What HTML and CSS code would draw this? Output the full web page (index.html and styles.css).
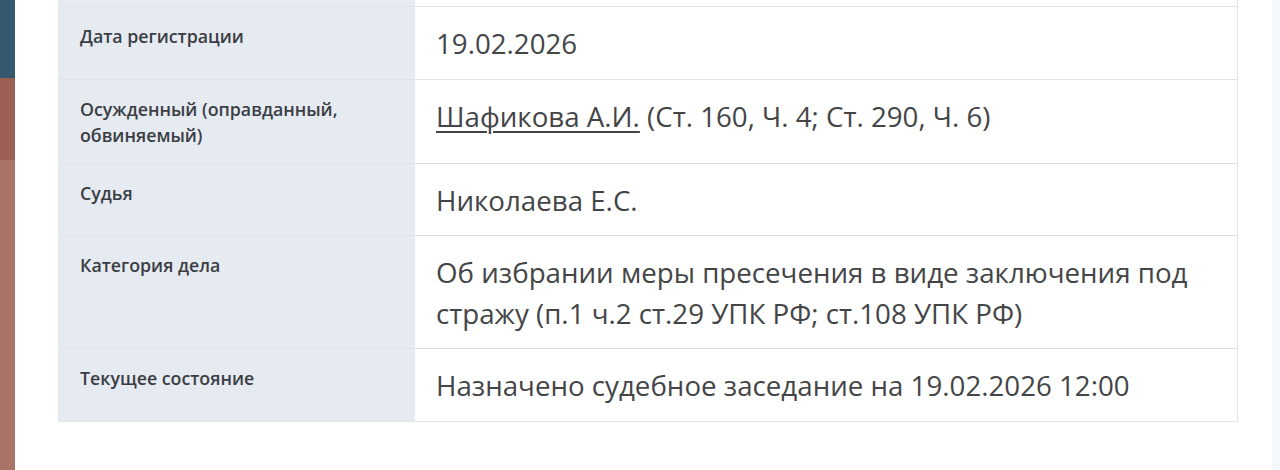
FILE: index.html
```html
<!DOCTYPE html>
<html lang="ru">
<head>
<meta charset="utf-8">
<link rel="stylesheet" href="styles.css">
</head>
<body>
<div class="page">
  <div class="stripe">
    <div class="stripe-a"></div>
    <div class="stripe-b"></div>
    <div class="stripe-c"></div>
  </div>
  <main class="content">
    <div class="table">
      <div class="row row-cut">
        <div class="label"></div>
        <div class="value"></div>
      </div>
      <div class="row">
        <div class="label">Дата регистрации</div>
        <div class="value">19.02.2026</div>
      </div>
      <div class="row">
        <div class="label">Осужденный (оправданный, обвиняемый)</div>
        <div class="value"><a class="link" href="#">Шафикова А.И.</a> (Ст. 160, Ч. 4; Ст. 290, Ч. 6)</div>
      </div>
      <div class="row">
        <div class="label">Судья</div>
        <div class="value">Николаева Е.С.</div>
      </div>
      <div class="row">
        <div class="label">Категория дела</div>
        <div class="value">Об избрании меры пресечения в виде заключения под стражу (п.1 ч.2 ст.29 УПК РФ; ст.108 УПК РФ)</div>
      </div>
      <div class="row">
        <div class="label">Текущее состояние</div>
        <div class="value">Назначено судебное заседание на 19.02.2026 12:00</div>
      </div>
    </div>
  </main>
  <div class="edge"></div>
</div>
</body>
</html>
```

FILE: styles.css
```css
html, body {
  margin: 0;
  padding: 0;
  background: #ffffff;
}
body {
  font-family: "Open Sans", "Noto Sans", sans-serif;
}
.page {
  display: flex;
  height: 470px;
  overflow: hidden;
}
.stripe {
  width: 15px;
  flex: none;
  display: flex;
  flex-direction: column;
}
.stripe-a { height: 78px; background: #355a70; }
.stripe-b { height: 82px; background: #9b5f53; }
.stripe-c { flex: 1; background: #a97367; }
.content {
  flex: 1;
  padding-left: 43px;
  padding-right: 34px;
}
.edge {
  width: 8px;
  flex: none;
  background: #f6f7f9;
}
.table {
  box-sizing: border-box;
  width: 1180px;
  border-left: 1px solid #e2e5ea;
  border-right: 1px solid #e2e5ea;
  border-bottom: 1px solid #e2e5e8;
}
.row {
  display: grid;
  grid-template-columns: 356px 1fr;
  border-top: 1px solid #dfe2e6;
}
.row-cut {
  height: 6px;
  border-top: none;
}
.label {
  background: #e6eaf1;
  padding: 16px 21px 15px;
  font-size: 17.8px;
  line-height: 26px;
  font-weight: 600;
  color: #3a3e44;
}
.row-cut .label, .row-cut .value { padding: 0; }
.value {
  padding: 16px 21px 15px;
  font-size: 27.7px;
  line-height: 40.5px;
  color: #444547;
}
.link {
  color: #444547;
  text-decoration: underline;
  text-decoration-thickness: 1.5px;
  text-underline-offset: 4px;
}
```
